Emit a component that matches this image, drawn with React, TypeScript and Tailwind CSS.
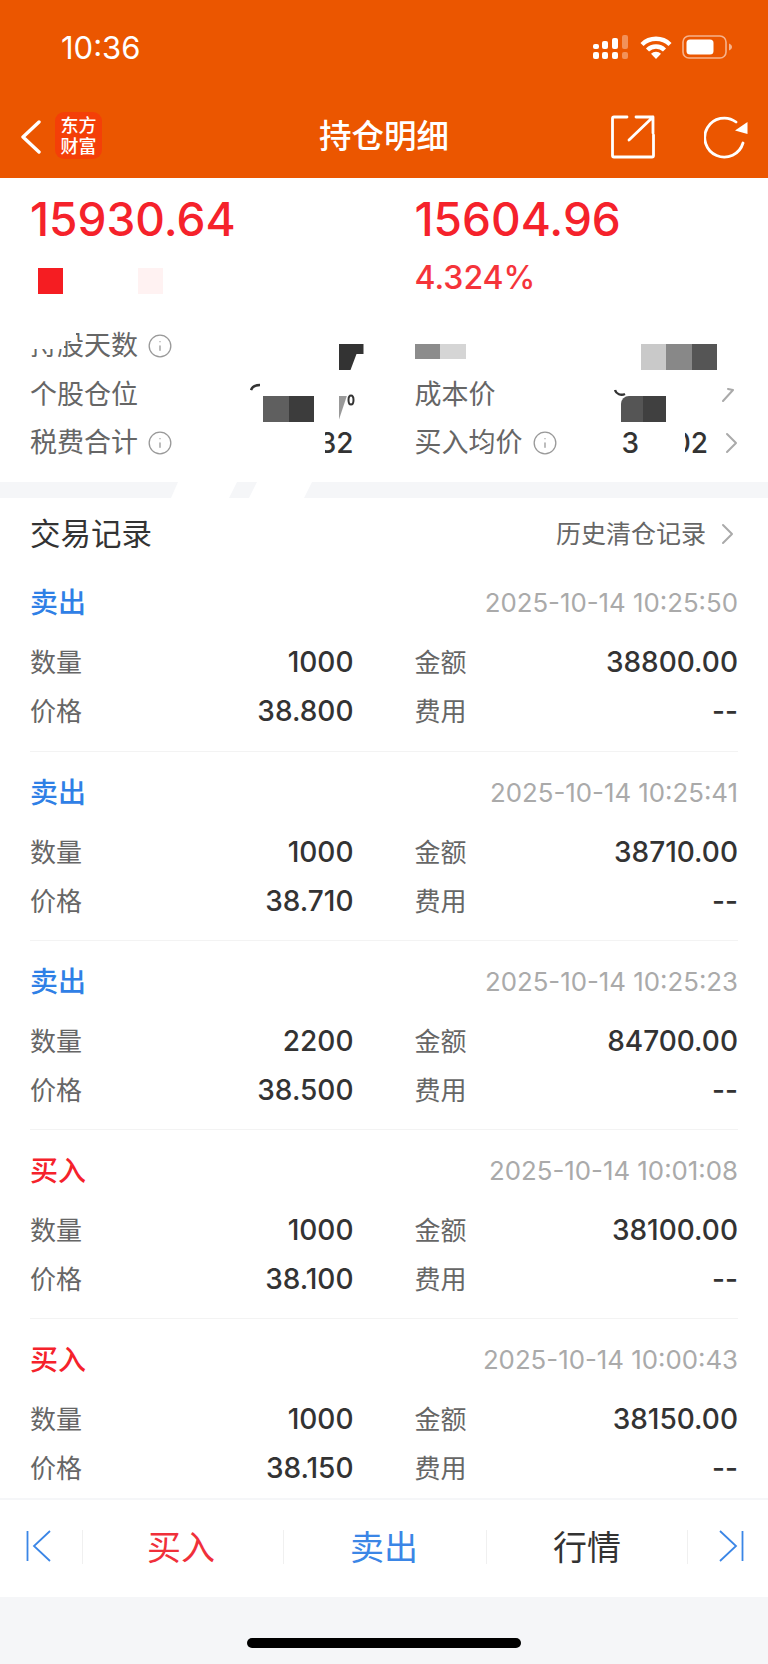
import React from "react";
import { Info } from "lucide-react";

const font = { fontFamily: "Inter, 'Noto Sans CJK SC', sans-serif" };

const trades = [
  { side: "卖出", time: "2025-10-14 10:25:50", qty: "1000", amount: "38800.00", price: "38.800" },
  { side: "卖出", time: "2025-10-14 10:25:41", qty: "1000", amount: "38710.00", price: "38.710" },
  { side: "卖出", time: "2025-10-14 10:25:23", qty: "2200", amount: "84700.00", price: "38.500" },
  { side: "买入", time: "2025-10-14 10:01:08", qty: "1000", amount: "38100.00", price: "38.100" },
  { side: "买入", time: "2025-10-14 10:00:43", qty: "1000", amount: "38150.00", price: "38.150" },
];

function Chevron({ className }: { className?: string }) {
  return (
    <svg viewBox="0 0 13 22" className={className} fill="none" stroke="#aaaaaa" strokeWidth="2" strokeLinecap="round" strokeLinejoin="round">
      <path d="M2 2l9 9-9 9" />
    </svg>
  );
}

function StatusBar() {
  return (
    <div className="flex h-[96px] items-start justify-between pl-[61px] pr-[35px] pt-[29px]">
      <span className="text-[31px] leading-[38px] text-white">10:36</span>
      <div className="flex items-center gap-[10px] pt-[6px]">
        <svg viewBox="0 0 36 24" className="h-[24px] w-[36px]" fill="#fff">
          <rect x="0" y="9" width="6" height="5" rx="2" />
          <rect x="0" y="17" width="6" height="7" rx="2" />
          <rect x="9" y="6" width="6" height="8" rx="2" />
          <rect x="9" y="17" width="6" height="7" rx="2" />
          <rect x="19" y="3" width="6" height="11" rx="2" />
          <rect x="19" y="17" width="6" height="7" rx="2" />
          <rect x="29" y="0" width="6" height="14" rx="2" opacity="0.35" />
          <rect x="29" y="17" width="6" height="7" rx="2" opacity="0.35" />
        </svg>
        <svg viewBox="0 0 32 24" className="ml-[1px] h-[24px] w-[32px]" fill="none" stroke="#fff" strokeWidth="4.4">
          <path d="M2 9.5a20 20 0 0 1 28 0" />
          <path d="M7.5 15a12 12 0 0 1 17 0" />
          <path d="M16 24l-5-5.2a7 7 0 0 1 10 0z" fill="#fff" stroke="none" />
        </svg>
        <svg viewBox="0 0 51 24" className="h-[24px] w-[51px]">
          <rect x="1" y="1" width="43" height="22" rx="6" fill="none" stroke="#fff" strokeOpacity="0.55" strokeWidth="1.6" />
          <rect x="4.5" y="4.5" width="27" height="15" rx="3.5" fill="#fff" />
          <path d="M47 8.5c2 .7 3 2 3 3.500s-1 2.800-3 3.500z" fill="#fff" fillOpacity="0.55" />
        </svg>
      </div>
    </div>
  );
}

function NavBar() {
  return (
    <div className="relative flex h-[82px] items-start pt-[16px]">
      <svg viewBox="0 0 22 34" className="ml-[20px] mt-[8px] h-[34px] w-[22px]" fill="none" stroke="#fff" strokeWidth="3.400" strokeLinecap="round" strokeLinejoin="round">
        <path d="M19 2L3 17l16 15" />
      </svg>
      <div className="ml-[13px] flex h-[47px] w-[47px] flex-col items-center justify-center rounded-[9px] bg-[#f43f08] text-[18px] font-medium leading-[21px] text-white">
        <span>东方</span>
        <span>财富</span>
      </div>
      <span className="absolute left-[319px] top-[20px] text-[32.500px] font-medium leading-[42px] text-white">持仓明细</span>
      <svg viewBox="0 0 44 44" className="ml-auto mt-[3px] h-[44px] w-[44px]" fill="none" stroke="#fff" strokeWidth="2.800" strokeLinecap="round" strokeLinejoin="round">
        <path d="M16 2H3a1.500 1.500 0 0 0-1.500 1.500v37A1.500 1.500 0 0 0 3 42h38a1.500 1.500 0 0 0 1.500-1.500V20" />
        <path d="M18 25L42 2M25 2h17v16" />
      </svg>
      <svg viewBox="0 0 44 44" className="ml-[49px] mr-[20px] mt-[3px] h-[44px] w-[44px]" fill="none" stroke="#fff" strokeWidth="2.800" strokeLinecap="round">
        <path d="M39 28A19.500 19.500 0 1 1 32 7" />
        <path d="M43.500 7v12L31 15.500z" fill="#fff" stroke="none" />
      </svg>
    </div>
  );
}

function Mosaic({ colors, className }: { colors: string[]; className: string }) {
  return (
    <div className={`absolute flex ${className}`}>
      {colors.map((c, i) => (
        <div key={i} className="h-full w-[25.500px]" style={{ backgroundColor: c }} />
      ))}
    </div>
  );
}

function Summary() {
  return (
    <section className="relative h-[304px] bg-white px-[30px]">
      <div className="grid grid-cols-2 gap-x-[61px]">
        <div className="h-[62px] text-[46px] font-medium leading-[82px] text-[#f5222b]">15930.64</div>
        <div className="h-[62px] text-[46px] font-medium leading-[82px] text-[#f5222b]">15604.96</div>
        <div className="flex h-[76px] gap-[50px] pl-[8px] pt-[28px]">
          <div className="h-[26px] w-[25px] bg-[#f51d22]" />
          <div className="ml-[25px] h-[26px] w-[25px] bg-[#fff2f2]" />
        </div>
        <div className="h-[76px] pt-[18px] text-[32px] font-medium leading-[40px] text-[#f5343a]">4.324%</div>
      </div>
      <div className="mt-[6px] grid grid-cols-2 gap-x-[61px] text-[27px] leading-[48.500px] text-[#666666]">
        <div className="relative flex h-[48.500px] items-center">
          <span>持股天数</span>
          <Info size={26} strokeWidth={1.2} color="#999999" className="ml-[9px]" />
          <div className="absolute left-0 top-[3px] h-[24px] w-[34px] bg-white" />
          <div className="absolute left-[34px] top-[3px] h-[16px] w-[12px] bg-white" />
          <div className="absolute right-[-10px] top-[22px] h-[26px] w-[25px] bg-[#333333] [clip-path:polygon(0_0,100%_0,100%_38%,72%_38%,48%_100%,0_100%)]" />
        </div>
        <div className="relative h-[48.500px]">
          <Mosaic colors={["#8c8c8c", "#d5d5d5"]} className="left-0 top-[22px] h-[15px]" />
          <Mosaic colors={["#c9c9c9", "#888888", "#555555"]} className="left-[226px] top-[22px] h-[26px]" />
        </div>
        <div className="relative flex h-[48.500px] items-center">
          <span>个股仓位</span>
          <svg viewBox="0 0 12 8" className="absolute left-[220px] top-[12px] h-[8px] w-[12px]" fill="none" stroke="#333333" strokeWidth="2.400">
            <path d="M1 7c1-3 4-5 9-5" />
          </svg>
          <Mosaic colors={["#5f5f5f", "#3c3c3c"]} className="left-[233px] top-[25px] h-[26px]" />
          <div className="absolute left-[309px] top-[25px] h-[24px] w-[8px] bg-[#999999] [clip-path:polygon(0_0,100%_0,0_100%)]" />
          <svg viewBox="0 0 8 14" className="absolute left-[317px] top-[21px] h-[14px] w-[8px]" fill="none" stroke="#333333" strokeWidth="2">
            <ellipse cx="4" cy="8" rx="2.500" ry="4.500" />
          </svg>
        </div>
        <div className="relative flex h-[48.500px] items-center">
          <span>成本价</span>
          <svg viewBox="0 0 12 10" className="absolute left-[199px] top-[17px] h-[10px] w-[12px]" fill="none" stroke="#333333" strokeWidth="2.400">
            <path d="M1 2c1 4 6 6 10 4" />
          </svg>
          <Mosaic colors={["#555555", "#404040"]} className="left-[206px] top-[25px] h-[26px] w-[45px] overflow-hidden rounded-tl-[8px]" />
          <svg viewBox="0 0 12 14" className="absolute left-[307px] top-[17px] h-[14px] w-[12px]" fill="none" stroke="#aaaaaa" strokeWidth="2" strokeLinecap="round">
            <path d="M1 13L11 2M6 1l5 1" />
          </svg>
        </div>
        <div className="relative flex h-[48.500px] items-center justify-between">
          <span className="flex items-center">
            税费合计
            <Info size={26} strokeWidth={1.2} color="#999999" className="ml-[9px]" />
          </span>
          <span className="relative text-[28px] font-medium text-[#333333]">
            32
            <span className="absolute left-0 top-[8px] h-[30px] w-[6px] bg-white" />
          </span>
        </div>
        <div className="relative flex h-[48.500px] items-center">
          <span className="flex items-center">
            买入均价
            <Info size={26} strokeWidth={1.2} color="#999999" className="ml-[9px]" />
          </span>
          <span className="absolute left-[207px] text-[28px] font-medium text-[#333333]">3</span>
          <span className="absolute right-[30px] text-[28px] font-medium text-[#333333]">
            02
            <span className="absolute left-0 top-[8px] h-[30px] w-[12px] bg-white" />
          </span>
          <Chevron className="absolute right-0 top-[13px] h-[22px] w-[13px]" />
        </div>
      </div>
    </section>
  );
}

function GapBand() {
  return (
    <div className="relative h-[16px] bg-[#f5f6f8]">
      <svg viewBox="0 0 768 16" className="absolute inset-0 h-[16px] w-[768px]" fill="#ffffff">
        <polygon points="178,0 237,0 229,16 171,16" />
        <polygon points="257,0 312,0 304,16 249,16" />
      </svg>
    </div>
  );
}

function TradeRow({ t, first }: { t: (typeof trades)[number]; first: boolean }) {
  const sell = t.side === "卖出";
  return (
    <div className={`mx-[30px] h-[189px] flex-none ${first ? "" : "border-t border-[#f3f3f3]"}`}>
      <div className="flex h-[76px] items-start justify-between pt-[21px]">
        <span className={`text-[28px] font-medium leading-[40px] ${sell ? "text-[#2f80e6]" : "text-[#f5222b]"}`}>{t.side}</span>
        <span className="text-[25.800px] leading-[40px] text-[#aaaaaa]">{t.time}</span>
      </div>
      <div className="grid grid-cols-2 gap-x-[61px] text-[26px] leading-[49px]">
        <div className="flex justify-between">
          <span className="text-[#666666]">数量</span>
          <span className="text-[28px] font-medium text-[#333333]">{t.qty}</span>
        </div>
        <div className="flex justify-between">
          <span className="text-[#666666]">金额</span>
          <span className="text-[28px] font-medium text-[#333333]">{t.amount}</span>
        </div>
        <div className="flex justify-between">
          <span className="text-[#666666]">价格</span>
          <span className="text-[28px] font-medium text-[#333333]">{t.price}</span>
        </div>
        <div className="flex justify-between">
          <span className="text-[#666666]">费用</span>
          <span className="text-[28px] font-medium text-[#333333]">--</span>
        </div>
      </div>
    </div>
  );
}

function BottomBar() {
  const divider = "h-[34px] w-[1px] bg-[#f0f0f0]";
  return (
    <div className="flex h-[99px] flex-none items-start border-t-2 border-[#f5f6f8] bg-white pt-[30px]">
      <svg viewBox="0 0 26 32" className="ml-[26px] h-[32px] w-[26px]" fill="none" stroke="#3b86e6" strokeWidth="1.800">
        <path d="M1.500 1v30M24 1L8 16l16 15" />
      </svg>
      <div className={`ml-[30px] ${divider}`} />
      <div className="w-[196px] text-center text-[34px] leading-[36px] text-[#f0303a]">买入</div>
      <div className="w-[4px]" />
      <div className={divider} />
      <div className="w-[200px] text-center text-[34px] leading-[36px] text-[#3b86e6]">卖出</div>
      <div className="w-[2px]" />
      <div className={divider} />
      <div className="w-[200px] text-center text-[34px] leading-[36px] text-[#333333]">行情</div>
      <div className={divider} />
      <svg viewBox="0 0 26 32" className="ml-[30px] h-[32px] w-[26px] -scale-x-100" fill="none" stroke="#3b86e6" strokeWidth="1.800">
        <path d="M1.500 1v30M24 1L8 16l16 15" />
      </svg>
    </div>
  );
}

export default function App() {
  return (
    <div className="flex h-[1664px] w-[768px] flex-col overflow-hidden bg-white" style={font}>
      <header className="h-[178px] flex-none bg-[#eb5600]">
        <StatusBar />
        <NavBar />
      </header>
      <Summary />
      <GapBand />
      <div className="flex h-[64px] flex-none items-start justify-between pl-[30px] pr-[34px] pt-[15px]">
        <span className="text-[30.500px] leading-[42px] text-[#333333]">交易记录</span>
        <span className="flex items-center gap-[15px] text-[25px] leading-[42px] text-[#666666]">
          历史清仓记录
          <Chevron className="h-[22px] w-[13px]" />
        </span>
      </div>
      <div className="min-h-0 flex-1 overflow-hidden">
        {trades.map((t, i) => (
          <TradeRow key={t.time} t={t} first={i === 0} />
        ))}
      </div>
      <BottomBar />
      <div className="flex h-[67px] flex-none justify-center bg-[#f5f6f8] pt-[41px]">
        <div className="h-[10px] w-[274px] rounded-full bg-black" />
      </div>
    </div>
  );
}
